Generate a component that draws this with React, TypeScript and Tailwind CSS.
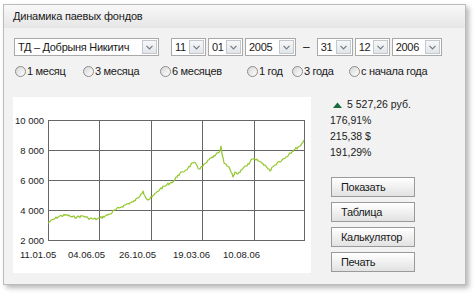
import React from "react";

const keyPts: [number, number][] = [[48,221],[54,217],[60,214],[67,213],[72,215],[77,215],[83,214],[88,216],[93,217],[97,217],[100,216],[105,214],[110,212],[115,208],[121,205],[127,202],[133,200],[138,196],[141,192],[143,189],[145,194],[148,198],[152,195],[156,191],[160,187],[165,184],[170,181],[174,179],[178,173],[183,170],[188,166],[193,161],[196,162],[199,167],[203,164],[207,160],[211,156],[215,154],[218,151],[220,149],[221,144],[222,152],[224,161],[227,164],[229,165],[231,170],[233,175],[235,170],[238,172],[241,168],[244,165],[247,164],[250,160],[253,157],[256,158],[259,159],[262,161],[265,163],[268,167],[270,169],[272,165],[275,163],[278,160],[282,158],[286,155],[290,151],[294,148],[298,145],[301,143],[304,138]];

// jagged line, 1px steps between key points
function buildPath() {
  let seed = 7;
  const rnd = () => { seed = (seed * 9301 + 49297) % 233280; return seed / 233280 - 0.5; };
  const out: string[] = [];
  for (let i = 0; i < keyPts.length - 1; i++) {
    const [x0, y0] = keyPts[i];
    const [x1, y1] = keyPts[i + 1];
    for (let x = x0; x < x1; x++) {
      const t = (x - x0) / (x1 - x0);
      const y = y0 + (y1 - y0) * t + (x === x0 ? 0 : rnd() * 2.4);
      out.push(`${out.length ? "L" : "M"}${x - 13} ${(y - 95).toFixed(1)}`);
    }
  }
  const [lx, ly] = keyPts[keyPts.length - 1];
  out.push(`L${lx - 13} ${ly - 95}`);
  return out.join(" ");
}
const linePath = buildPath();

function Chevron() {
  return (
    <svg width="7" height="5" viewBox="0 0 7 5"><path d="M0.5 0.8 L3.5 3.8 L6.5 0.8" fill="none" stroke="#6f7a86" strokeWidth="1.2" /></svg>
  );
}

function Sel({ v, w }: { v: string; w: string }) {
  return (
    <div className={`flex items-center h-[18px] border border-[#a9a9a9] bg-white ${w}`}>
      <span className="flex-1 pl-[3px] text-[11px] tracking-[-0.3px] leading-none text-[#1a1a1a] whitespace-nowrap">{v}</span>
      <span className="w-[15px] h-[14px] mr-px border border-[#c4c8cc] bg-gradient-to-b from-[#f6f7f8] to-[#e3e6e9] flex items-center justify-center"><Chevron /></span>
    </div>
  );
}

function Radio({ label, w }: { label: string; w: string }) {
  return (
    <div className={`flex items-center ${w}`}>
      <span className="w-[11px] h-[11px] rounded-full border border-[#8c8c8c] bg-gradient-to-br from-[#d6d6d6] to-white" />
      <span className="ml-px text-[11px] tracking-[-0.3px] text-[#1a1a1a] whitespace-nowrap">{label}</span>
    </div>
  );
}

function Btn({ children }: { children: React.ReactNode }) {
  return (
    <div className="w-[84px] h-[20px] border border-[#9a9a9a] bg-gradient-to-b from-white to-[#e2e2e2] flex items-center pl-[9px] text-[11px] tracking-[-0.3px] text-[#1a1a1a]">{children}</div>
  );
}

export default function App() {
  const gx = [35.5, 86.5, 138.5, 189.5, 241.5, 291.5];
  const gy = [23.5, 53.5, 83.5, 113.5, 143.5];
  const yl = ["10 000", "8 000", "6 000", "4 000", "2 000"];
  const xl: [number, string][] = [[7, "11.01.05"], [55, "04.06.05"], [106, "26.10.05"], [160, "19.03.06"], [210, "10.08.06"]];
  return (
    <div className="pt-[4px] pl-[3px] bg-white w-[476px] h-[294px] font-['Liberation_Sans',Arial,sans-serif]">
      <div className="w-[463px] h-[281px] border border-[#bcbcbc] bg-[#f2f2f2] shadow-[3px_3px_5px_rgba(0,0,0,0.28)]">
        <div className="h-[23px] bg-gradient-to-b from-[#f8f8f8] to-[#e6e6e6] flex items-center pl-[9px] text-[11px] tracking-[-0.2px] text-[#1a1a1a]">
          Динамика паевых фондов
        </div>
        <div className="pl-[9px]">
          <div className="flex items-center pt-[10px] pl-px">
            <Sel v="ТД – Добрыня Никитич" w="w-[145px]" />
            <div className="ml-[12px]"><Sel v="11" w="w-[35px]" /></div>
            <div className="ml-[2px]"><Sel v="01" w="w-[35px]" /></div>
            <div className="ml-[2px]"><Sel v="2005" w="w-[51px]" /></div>
            <span className="mx-[7px] text-[12px] text-[#1a1a1a]">–</span>
            <Sel v="31" w="w-[36px]" />
            <div className="ml-[2px]"><Sel v="12" w="w-[35px]" /></div>
            <div className="ml-[2px]"><Sel v="2006" w="w-[50px]" /></div>
          </div>
          <div className="flex items-center mt-[9px] pl-[2px] h-[12px]">
            <Radio label="1 месяц" w="w-[68px]" />
            <Radio label="3 месяца" w="w-[77px]" />
            <Radio label="6 месяцев" w="w-[87px]" />
            <Radio label="1 год" w="w-[45px]" />
            <Radio label="3 года" w="w-[57px]" />
            <Radio label="с начала года" w="w-[90px]" />
          </div>
          <div className="flex mt-[20px]">
            <div className="w-[298px] h-[176px] bg-white">
              <svg width="298" height="176" className="font-['Liberation_Sans',Arial,sans-serif]">
                {gx.map((x) => <line key={x} x1={x} y1={23} x2={x} y2={144} stroke="#666" strokeWidth="1" />)}
                {gy.map((y) => <line key={y} x1={35} y1={y} x2={292} y2={y} stroke="#666" strokeWidth="1" />)}
                {gy.map((y, i) => <text key={i} x={31} y={y + 3.5} fontSize="9.5" fill="#222" textAnchor="end">{yl[i]}</text>)}
                {xl.map(([x, t]) => <text key={t} x={x} y={161} fontSize="9.5" fill="#222">{t}</text>)}
                <path d={linePath} fill="none" stroke="#92c72c" strokeWidth="1.2" strokeLinejoin="round" />
              </svg>
            </div>
            <div className="ml-[19px] text-[10.5px] text-[#1a1a1a]">
              <div className="h-[16px] flex items-center">
                <svg width="9" height="6" className="ml-[3px] mr-[5px]"><path d="M0 6 L4.5 0.5 L9 6 Z" fill="#1d6b3c" /></svg>
                5 527,26 руб.
              </div>
              <div className="h-[16px] flex items-center">176,91%</div>
              <div className="h-[16px] flex items-center">215,38 $</div>
              <div className="h-[16px] flex items-center">191,29%</div>
              <div className="mt-[16px] pl-px flex flex-col gap-[5px]">
                <Btn>Показать</Btn>
                <Btn>Таблица</Btn>
                <Btn>Калькулятор</Btn>
                <Btn>Печать</Btn>
              </div>
            </div>
          </div>
        </div>
      </div>
    </div>
  );
}
